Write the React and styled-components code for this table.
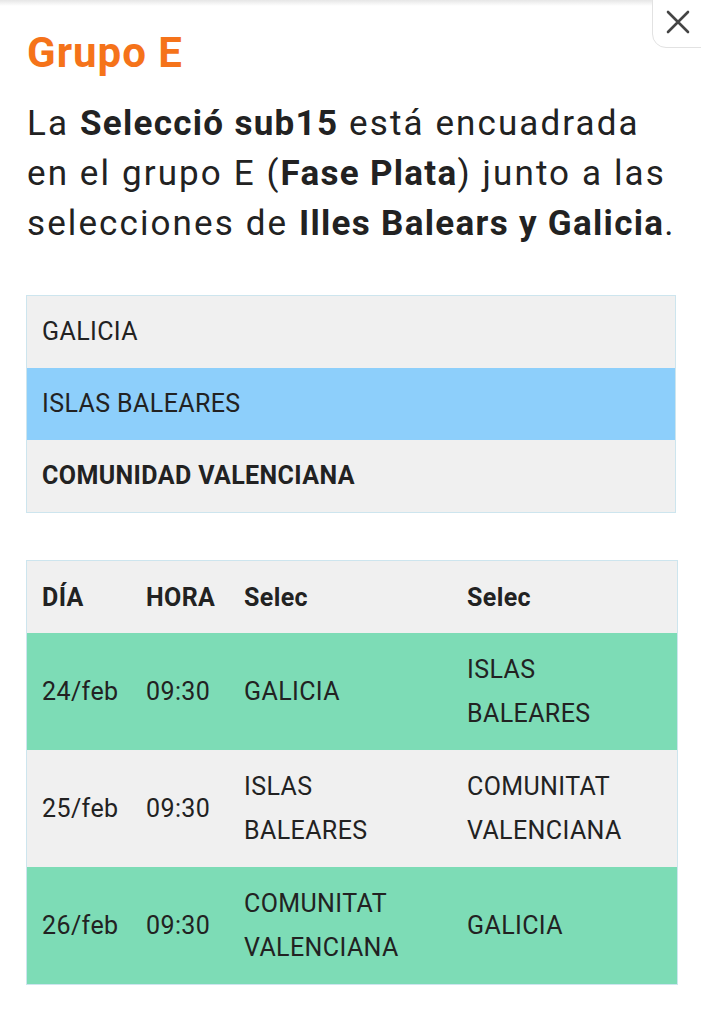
import React from 'react';
import styled, { createGlobalStyle } from 'styled-components';

const GlobalStyle = createGlobalStyle`
  body {
    margin: 0;
    background: #ffffff;
    font-family: Roboto, 'Noto Sans', sans-serif;
    color: #222222;
    -webkit-font-smoothing: antialiased;
  }
`;

const Page = styled.div`
  position: relative;
  min-height: 1024px;
  padding: 0 25px 0 26px;
  &::before {
    content: '';
    display: block;
    height: 6px;
    margin: 0 -25px 0 -26px;
    background: linear-gradient(#e6e6e6, #ffffff);
  }
`;

const CloseButton = styled.button`
  position: absolute;
  top: -1px;
  right: -1px;
  width: 50px;
  height: 49px;
  border: 1px solid #e2e2e2;
  border-bottom-left-radius: 14px;
  background: #ffffff;
  display: flex;
  align-items: center;
  justify-content: center;
  padding: 0 0 4px 2px;
  cursor: pointer;
`;

const Title = styled.h2`
  margin: 23px 0 0 1px;
  font-size: 42px;
  font-weight: 700;
  line-height: 48px;
  letter-spacing: 1px;
  color: #f5731a;
`;

const Intro = styled.p`
  margin: 22px 0 0 1px;
  font-size: 35px;
  line-height: 50px;
  letter-spacing: 2.1px;
  font-weight: 400;
  color: #222222;
  b {
    font-weight: 700;
    letter-spacing: 1.3px;
  }
`;

const Table = styled.table`
  width: 650px;
  border-collapse: collapse;
  table-layout: fixed;
  margin-top: ${(p) => p.$gap}px;
  border: 1px solid #cde5ee;
  font-size: 25px;
  letter-spacing: 0.4px;
  color: #222222;
`;

const Row = styled.tr`
  background: ${(p) => p.$bg};
`;

const Cell = styled.td`
  padding: 0 10px 0 15px;
  height: ${(p) => p.$h}px;
  line-height: 44px;
  vertical-align: middle;
  font-weight: ${(p) => (p.$bold ? 700 : 400)};
`;

const HeadCell = styled.th`
  padding: 0 10px 0 15px;
  height: 72px;
  text-align: left;
  font-weight: 700;
  width: ${(p) => p.$w - 25}px;
`;

const GRAY = '#f0f0f0';
const BLUE = '#8dcffb';
const GREEN = '#7ddcb6';

const teams = [
  { name: 'GALICIA', bg: GRAY },
  { name: 'ISLAS BALEARES', bg: BLUE },
  { name: 'COMUNIDAD VALENCIANA', bg: GRAY, bold: true },
];

const matches = [
  { day: '24/feb', time: '09:30', a: ['GALICIA'], b: ['ISLAS', 'BALEARES'], bg: GREEN },
  { day: '25/feb', time: '09:30', a: ['ISLAS', 'BALEARES'], b: ['COMUNITAT', 'VALENCIANA'], bg: GRAY },
  { day: '26/feb', time: '09:30', a: ['COMUNITAT', 'VALENCIANA'], b: ['GALICIA'], bg: GREEN },
];

const Lines = ({ items }) =>
  items.map((t, i) => (
    <React.Fragment key={t}>
      {i > 0 && <br />}
      {t}
    </React.Fragment>
  ));

const App = () => (
  <>
    <GlobalStyle />
    <Page>
      <CloseButton aria-label="Cerrar">
        <svg width="24" height="24" viewBox="0 0 24 24">
          <path d="M2 2 L22 22 M22 2 L2 22" stroke="#444" strokeWidth="2.6" strokeLinecap="round" />
        </svg>
      </CloseButton>
      <Title>Grupo E</Title>
      <Intro>
        La <b>Selecció sub15</b> está encuadrada en el grupo E (<b>Fase Plata</b>) junto a las
        selecciones de <b>Illes Balears y Galicia</b>.
      </Intro>

      <Table $gap={46}>
        <tbody>
          {teams.map((t) => (
            <Row key={t.name} $bg={t.bg}>
              <Cell $h={72} $bold={t.bold}>{t.name}</Cell>
            </Row>
          ))}
        </tbody>
      </Table>

      <Table $gap={47}>
        <thead>
          <Row $bg={GRAY}>
            <HeadCell $w={104}>DÍA</HeadCell>
            <HeadCell $w={98}>HORA</HeadCell>
            <HeadCell $w={223}>Selec</HeadCell>
            <HeadCell $w={225}>Selec</HeadCell>
          </Row>
        </thead>
        <tbody>
          {matches.map((m) => (
            <Row key={m.day} $bg={m.bg}>
              <Cell $h={117}>{m.day}</Cell>
              <Cell $h={117}>{m.time}</Cell>
              <Cell $h={117}><Lines items={m.a} /></Cell>
              <Cell $h={117}><Lines items={m.b} /></Cell>
            </Row>
          ))}
        </tbody>
      </Table>
    </Page>
  </>
);

export default App;
